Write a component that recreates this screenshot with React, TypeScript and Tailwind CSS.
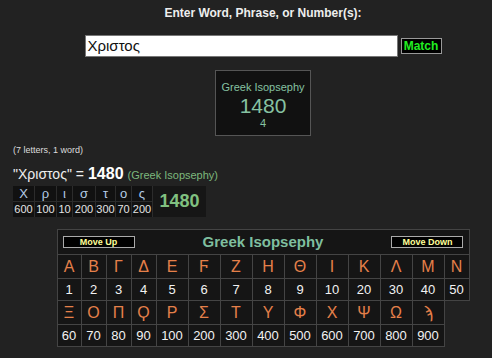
const row1 = ["Α", "Β", "Γ", "Δ", "Ε", "Ϝ", "Ζ", "Η", "Θ", "Ι", "Κ", "Λ", "Μ", "Ν"];
const row2 = ["1", "2", "3", "4", "5", "6", "7", "8", "9", "10", "20", "30", "40", "50"];
const row3 = ["Ξ", "Ο", "Π", "Ϙ", "Ρ", "Σ", "Τ", "Υ", "Φ", "Χ", "Ψ", "Ω", "ϡ"];
const row4 = ["60", "70", "80", "90", "100", "200", "300", "400", "500", "600", "700", "800", "900"];

const word = [
  ["Χ", "600", "w-[22px]"],
  ["ρ", "100", "w-[22px]"],
  ["ι", "10", "w-[16px]"],
  ["σ", "200", "w-[23px]"],
  ["τ", "300", "w-[20px]"],
  ["ο", "70", "w-[16px]"],
  ["ς", "200", "w-[21px]"],
];

function Cell({ text, kind, first }: { text: string; kind: "letter" | "num"; first: boolean }) {
  return (
    <div
      className={
        "flex items-center justify-center bg-[#151515] border-r border-b border-[#444] " +
        (first ? "border-l " : "") +
        (kind === "letter"
          ? "h-[24px] text-[16px] text-[#e5804a]"
          : "h-[22px] text-[13px] text-[#f2f2f2]")
      }
    >
      {text}
    </div>
  );
}

function MoveButton({ label }: { label: string }) {
  return (
    <button className="w-[72px] h-[12px] bg-black border border-[#aaa] text-[9px] leading-none font-bold text-[#ffff99] flex items-center justify-center">
      {label}
    </button>
  );
}

export default function App() {
  return (
    <div className="min-h-[358px] bg-[#222] font-['Liberation_Sans',Arial,sans-serif] text-[#eee]">
      <div className="flex flex-col items-center pl-[34px]">
        <div className="mt-[6px] text-[12px] font-bold leading-[14px] text-[#eee]">
          Enter Word, Phrase, or Number(s):
        </div>
        <div className="mt-[15px] flex items-center gap-[3px]">
          <div className="w-[313px] h-[22px] bg-white border border-[#777] flex items-center px-[2px] text-[15px] text-[#111]">
            Χριστος
          </div>
          <button className="h-[16px] w-[41px] bg-black border border-[#999] text-[12px] font-bold text-[#22ee22] flex items-center justify-center leading-none">
            Match
          </button>
        </div>
        <div className="mt-[13px] w-[96px] h-[66px] bg-[#111] border border-[#555] flex flex-col items-center pt-[10px] text-[#86c2a2]">
          <div className="text-[11px] leading-[13px]">Greek Isopsephy</div>
          <div className="text-[21px] leading-[23px]">1480</div>
          <div className="text-[11px] leading-[12px]">4</div>
        </div>
      </div>

      <div className="pl-[13px]">
        <div className="mt-[8px] text-[9px] leading-[12px] text-[#ddd]">(7 letters, 1 word)</div>
        <div className="mt-[9px] flex items-baseline leading-[18px]">
          <span className="text-[14px] text-[#eee]">"Χριστος" = </span>
          <span className="ml-[4px] text-[16px] font-bold text-white">1480</span>
          <span className="ml-[4px] text-[11px] text-[#7db87d]">(Greek Isopsephy)</span>
        </div>
        <div className="mt-[2px] flex w-max bg-[#161616]">
          {word.map(([l, n, w], i) => (
            <div key={i} className={"flex flex-col border-r border-[#2c2c2c] " + w}>
              <div className="h-[16px] flex items-center justify-center text-[13px] text-[#b4cce6] bg-[#111] border-b border-[#2c2c2c]">
                {l}
              </div>
              <div className="h-[15px] flex items-center justify-center text-[11px] text-[#e4e4e4] bg-[#111]">
                {n}
              </div>
            </div>
          ))}
          <div className="w-[53px] flex items-center justify-center text-[18px] font-bold text-[#80c080]">
            1480
          </div>
        </div>
      </div>

      <div className="flex justify-center pl-[34px] mt-[12px]">
        <div className="grid grid-cols-[25px_25px_25px_25px_32px_32px_32px_32px_32px_32px_32px_32px_32px_25px]">
          <div className="col-span-14 h-[26px] bg-[#151515] border border-[#444] flex items-center justify-between px-[5px]">
            <MoveButton label="Move Up" />
            <div className="text-[15px] font-bold text-[#7fbf9f]">Greek Isopsephy</div>
            <MoveButton label="Move Down" />
          </div>
          {row1.map((t, i) => (
            <Cell key={"a" + i} text={t} kind="letter" first={i === 0} />
          ))}
          {row2.map((t, i) => (
            <Cell key={"b" + i} text={t} kind="num" first={i === 0} />
          ))}
          {row3.map((t, i) => (
            <Cell key={"c" + i} text={t} kind="letter" first={i === 0} />
          ))}
          <div />
          {row4.map((t, i) => (
            <Cell key={"d" + i} text={t} kind="num" first={i === 0} />
          ))}
        </div>
      </div>
    </div>
  );
}
